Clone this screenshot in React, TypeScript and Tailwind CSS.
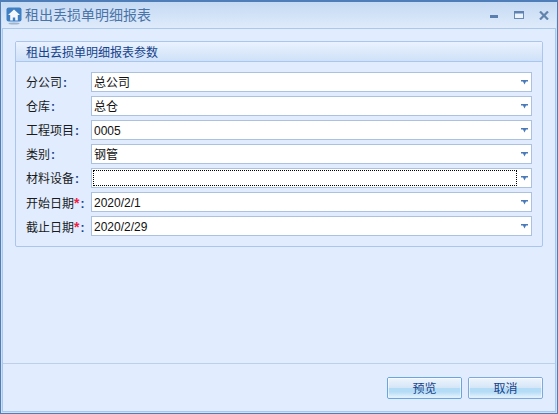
const FIELDS = [
  { label: "分公司", value: "总公司" },
  { label: "仓库", value: "总仓" },
  { label: "工程项目", value: "0005" },
  { label: "类别", value: "钢管" },
  { label: "材料设备", value: "", focused: true },
  { label: "开始日期", value: "2020/2/1", required: true },
  { label: "截止日期", value: "2020/2/29", required: true },
]

function Arrow() {
  return (
    <svg width="7" height="5" viewBox="0 0 7 5" className="shrink-0">
      <path d="M0 0h7v1.5H5L3.5 4.5 2 1.5H0z" fill="#4a7ab8" />
    </svg>
  )
}

function Field({ label, value, required, focused }: { label: string; value: string; required?: boolean; focused?: boolean }) {
  return (
    <div className="flex items-center h-5">
      <div className="w-[65px] shrink-0 pt-[2px] text-[12px] leading-none text-[#1a1a1a] whitespace-nowrap">
        {label}
        {required && <span className="font-bold text-[14px] leading-none text-[#f02040]">*</span>}
        <span className="ml-[1px] font-bold text-[#15428b]">:</span>
      </div>
      <div className="flex-1 h-5 flex items-center bg-white border border-[#abc1de] pl-[1px] pr-[3px]">
        <div className={`flex-1 h-4 mr-[4px] flex items-center pl-[1px] pt-[1px] text-[12px] leading-none text-[#111] ${focused ? "border border-dotted border-black" : ""}`}>
          {value}
        </div>
        <Arrow />
      </div>
    </div>
  )
}

function WinButton({ label, active }: { label: string; active?: boolean }) {
  return (
    <button
      className={`w-[75px] h-[22px] rounded-[2px] border text-[12px] leading-none text-[#15428b] bg-gradient-to-b from-[#eef5fd] from-0% via-[#d5e5f7] via-50% to-[#b5dcf6] to-50% ${active ? "border-[#6aa5e0]" : "border-[#7fa9dc]"}`}
    >
      <span className="block w-full h-full leading-[20px] rounded-[1px] border border-white/60 bg-gradient-to-b from-transparent from-70% to-[#dff0fc]">{label}</span>
    </button>
  )
}

export default function App() {
  return (
    <div className="w-[558px] h-[414px] flex overflow-hidden bg-[#4f7db8] p-[1px] pt-[2px] font-['Liberation_Sans','Noto_Sans_CJK_SC',sans-serif]">
      <div className="flex-1 flex flex-col bg-[#cfe0f6] px-[1px] pb-[1px]">
        {/* title bar */}
        <div className="h-[26px] shrink-0 flex items-center pl-[4px] pr-[7px] bg-gradient-to-b from-[#c5daf3] to-[#dfebfb]">
          <svg width="16" height="18" viewBox="0 0 16 18" className="shrink-0 mt-[2px]">
            <ellipse cx="8" cy="16.5" rx="5.5" ry="1" fill="#9db4cf" />
            <rect x="0.5" y="0.5" width="15" height="14" rx="2" fill="#3f7fc4" />
            <path d="M8 2.5 2 8h2.2v5.5h2.6v-3h2.4v3h2.6V8H14z" fill="#f4f8fd" />
          </svg>
          <span className="ml-[3px] text-[14px] leading-none text-[#4a74a8]">租出丢损单明细报表</span>
          <div className="ml-auto flex items-center">
            <svg width="8" height="3" viewBox="0 0 8 3" className="mr-[16px] mt-[3px]">
              <rect width="8" height="3" fill="#5a7fae" />
            </svg>
            <svg width="10" height="8" viewBox="0 0 10 8" className="mr-[15px]">
              <rect x="0.5" y="0.5" width="9" height="7" fill="#eaf2fb" stroke="#6a8ab4" />
              <rect width="10" height="2.5" fill="#5f82b0" />
            </svg>
            <svg width="10" height="9" viewBox="0 0 10 9">
              <path d="M1 0.5 9 8.5M9 0.5 1 8.5" stroke="#6283ad" strokeWidth="2.2" />
            </svg>
          </div>
        </div>

        {/* body */}
        <div className="flex-1 flex flex-col bg-[#e1edff] border border-[#a9c8ea]">
          <div className="flex-1 pt-[12px] pl-[12px] pr-[12px]">
            <div className="h-[206px] rounded-[2px] border border-[#a9c6ec] flex flex-col">
              <div className="h-[20px] shrink-0 flex items-center pl-[10px] pt-[2px] text-[12px] leading-none text-[#15428b] border-b border-[#a9c6ec] bg-gradient-to-b from-[#eaf2fe] to-[#cfe1f8]">
                租出丢损单明细报表参数
              </div>
              <div className="flex flex-col gap-1 pt-[10px] pl-[10px] pr-[10px]">
                {FIELDS.map((f) => (
                  <Field key={f.label} {...f} />
                ))}
              </div>
            </div>
          </div>
          <div className="h-[48px] shrink-0 border-t border-[#bcd0e8] flex items-start justify-end gap-[6px] pt-[13px] pr-[12px]">
            <WinButton label="预览" active />
            <WinButton label="取消" />
          </div>
        </div>
      </div>
    </div>
  )
}
